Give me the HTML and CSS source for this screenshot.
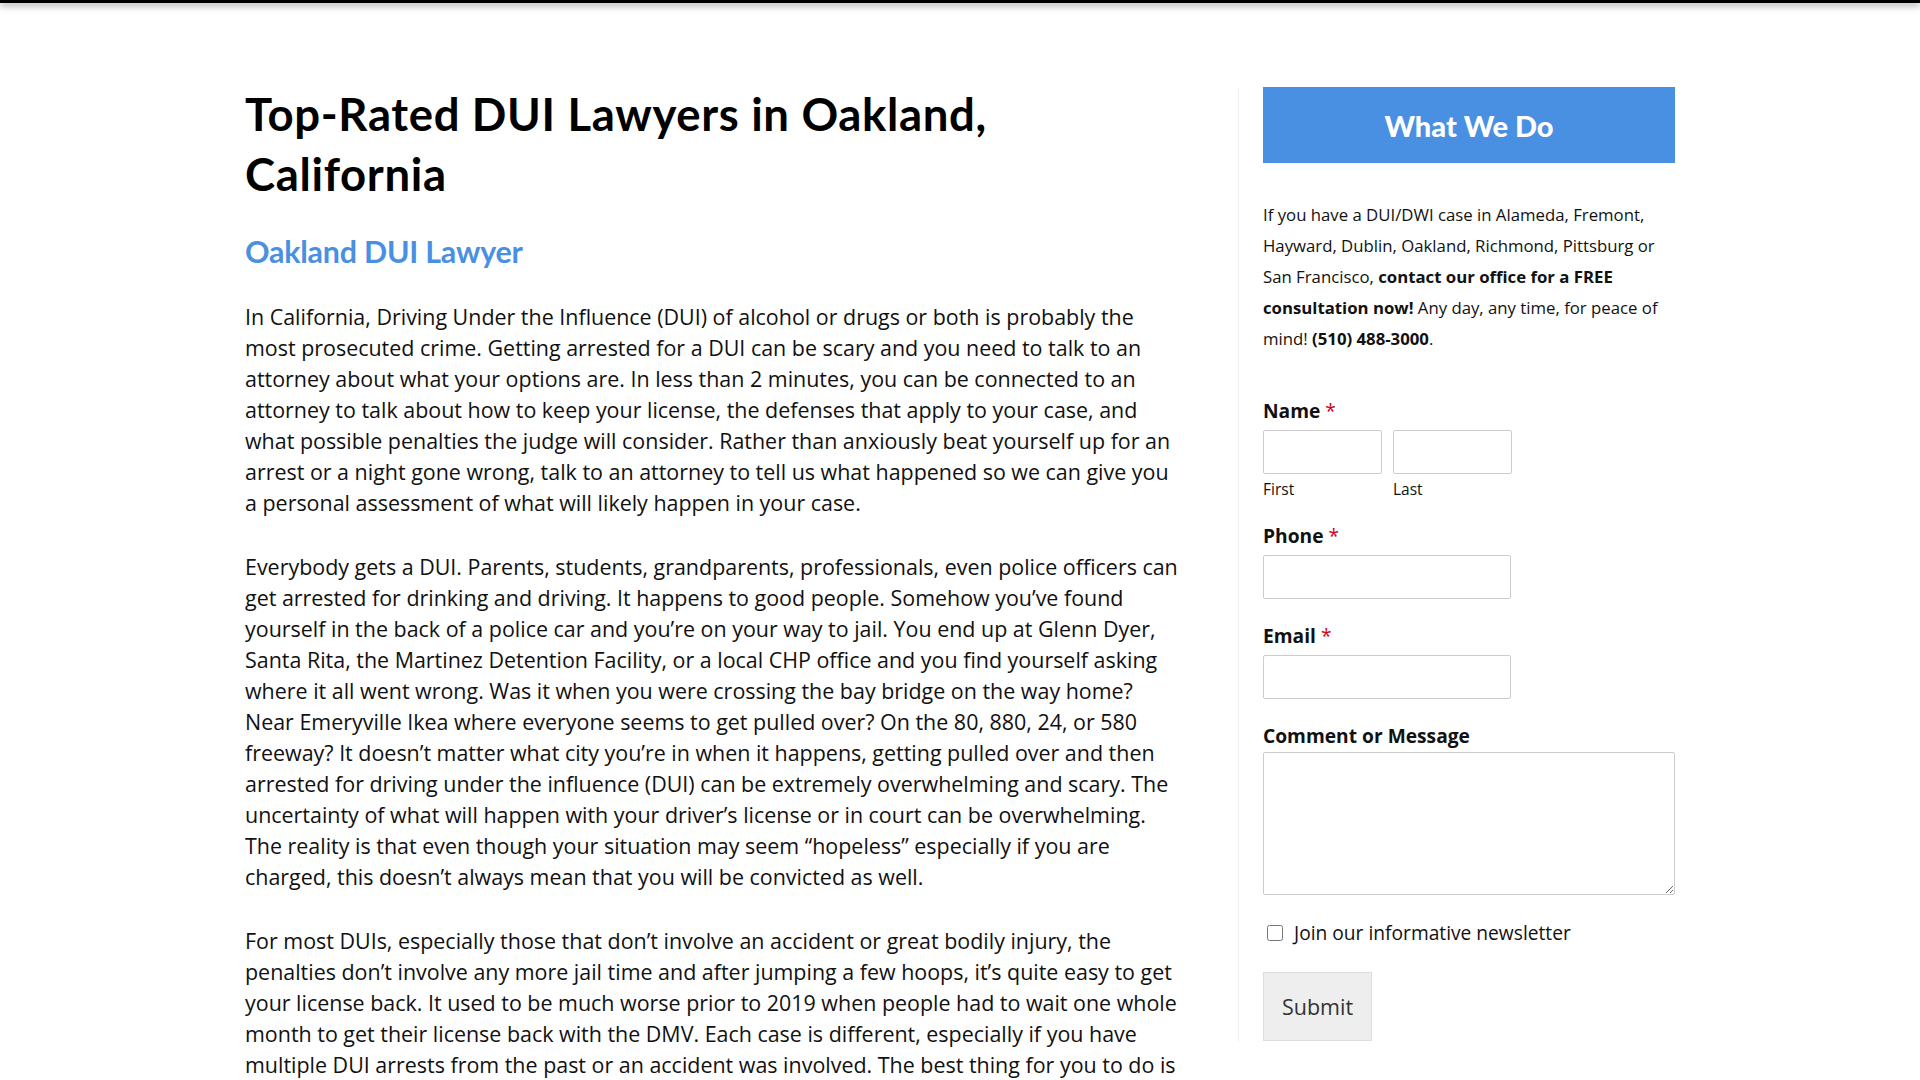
FILE: index.html
```html
<!DOCTYPE html>
<html lang="en">
<head>
<meta charset="utf-8">
<title>Top-Rated DUI Lawyers in Oakland, California</title>
<link rel="stylesheet" href="styles.css">
</head>
<body>
<div class="topbar"></div>
<div class="page">
  <main class="content">
    <h1 class="title">Top-Rated DUI Lawyers in Oakland, California</h1>
    <h2 class="subtitle">Oakland DUI Lawyer</h2>
    <p class="para">In California, Driving Under the Influence (DUI) of alcohol or drugs or both is probably the most prosecuted crime. Getting arrested for a DUI can be scary and you need to talk to an attorney about what your options are. In less than 2 minutes, you can be connected to an attorney to talk about how to keep your license, the defenses that apply to your case, and what possible penalties the judge will consider. Rather than anxiously beat yourself up for an arrest or a night gone wrong, talk to an attorney to tell us what happened so we can give you a personal assessment of what will likely happen in your case.</p>
    <p class="para">Everybody gets a DUI. Parents, students, grandparents, professionals, even police officers can get arrested for drinking and driving. It happens to good people. Somehow you’ve found yourself in the back of a police car and you’re on your way to jail. You end up at Glenn Dyer, Santa Rita, the Martinez Detention Facility, or a local CHP office and you find yourself asking where it all went wrong. Was it when you were crossing the bay bridge on the way home? Near Emeryville Ikea where everyone seems to get pulled over? On the 80, 880, 24, or 580 freeway? It doesn’t matter what city you’re in when it happens, getting pulled over and then arrested for driving under the influence (DUI) can be extremely overwhelming and scary. The uncertainty of what will happen with your driver’s license or in court can be overwhelming. The reality is that even though your situation may seem “hopeless” especially if you are charged, this doesn’t always mean that you will be convicted as well.</p>
    <p class="para">For most DUIs, especially those that don’t involve an accident or great bodily injury, the penalties don’t involve any more jail time and after jumping a few hoops, it’s quite easy to get your license back. It used to be much worse prior to 2019 when people had to wait one whole month to get their license back with the DMV. Each case is different, especially if you have multiple DUI arrests from the past or an accident was involved. The best thing for you to do is to call an attorney as soon as possible so they can help you figure out what comes next.</p>
  </main>
  <aside class="sidebar">
    <div class="widget-head">What We Do</div>
    <p class="widget-text">If you have a DUI/DWI case in Alameda, Fremont, Hayward, Dublin, Oakland, Richmond, Pittsburg or San Francisco, <strong>contact our office for a FREE consultation now!</strong> Any day, any time, for peace of mind! <strong>(510) 488-3000</strong>.</p>
    <form class="form">
      <div class="field">
        <div class="label">Name <span class="req">*</span></div>
        <div class="name-row">
          <div class="name-col">
            <input class="input input-half" type="text">
            <div class="sublabel">First</div>
          </div>
          <div class="name-col">
            <input class="input input-half" type="text">
            <div class="sublabel">Last</div>
          </div>
        </div>
      </div>
      <div class="field">
        <div class="label">Phone <span class="req">*</span></div>
        <input class="input input-med" type="text">
      </div>
      <div class="field">
        <div class="label">Email <span class="req">*</span></div>
        <input class="input input-med" type="text">
      </div>
      <div class="field">
        <div class="label">Comment or Message</div>
        <textarea class="textarea"></textarea>
      </div>
      <label class="check-row"><input class="check" type="checkbox"><span>Join our informative newsletter</span></label>
      <button class="submit" type="button">Submit</button>
    </form>
  </aside>
</div>
</body>
</html>
```
FILE: styles.css
```css
html, body {
  margin: 0;
  padding: 0;
  background: #fff;
}
body {
  font-family: "Open Sans", "Liberation Sans", sans-serif;
  color: #111;
  overflow: hidden;
}
.topbar {
  height: 3px;
  background: #000;
  box-shadow: 0 2px 7px rgba(0, 0, 0, 0.55);
}
.page {
  width: 1430px;
  margin: 0 auto;
  padding-top: 85px;
  display: flex;
  align-items: flex-start;
}
.content {
  flex: 0 0 938px;
  margin-right: 55px;
}
.title {
  font-family: "Lato", "Liberation Sans", sans-serif;
  font-weight: 700;
  font-size: 45.5px;
  line-height: 60px;
  margin: -4px 0 0;
  max-width: 860px;
  color: #000;
  letter-spacing: 0.65px;
}
.subtitle {
  font-family: "Lato", "Liberation Sans", sans-serif;
  font-weight: 700;
  font-size: 30.4px;
  line-height: 40px;
  margin: 27px 0 0;
  color: #4a90e2;
  letter-spacing: -0.2px;
}
.para {
  font-size: 21.45px;
  line-height: 31px;
  margin: 30px 0 33px;
  color: #111;
}
.para + .para {
  margin-top: 0;
}
.sidebar {
  flex: 1 1 auto;
  border-left: 1px solid #eee;
  padding-left: 24px;
}
.widget-head {
  height: 76px;
  margin-top: -1px;
  background: #4a90e2;
  color: #fff;
  font-family: "Lato", "Liberation Sans", sans-serif;
  font-weight: 900;
  font-size: 29px;
  display: flex;
  align-items: center;
  justify-content: center;
}
.widget-text {
  font-size: 16.75px;
  line-height: 31px;
  margin: 36px 0 44px;
  color: #111;
}
.widget-text strong {
  font-weight: 700;
}
.field {
  margin-bottom: 24px;
}
.label {
  font-weight: 700;
  font-size: 19.2px;
  line-height: 24px;
  padding-top: 1px;
  margin-bottom: 7px;
  color: #111;
}
.req {
  color: #d0021b;
  font-weight: 400;
}
.name-row {
  display: flex;
  gap: 11px;
}
.input {
  display: block;
  box-sizing: border-box;
  height: 44px;
  border: 1px solid #ccc;
  border-radius: 2px;
  background: #fff;
  margin: 0;
  padding: 0 8px;
}
.input-half {
  width: 119px;
}
.input-med {
  width: 248px;
}
.sublabel {
  font-size: 15.5px;
  line-height: 20px;
  margin-top: 5px;
  color: #111;
}
.textarea {
  display: block;
  box-sizing: border-box;
  width: 100%;
  height: 143px;
  border: 1px solid #ccc;
  border-radius: 2px;
  margin: -3px 0 0;
  padding: 8px;
  font-family: inherit;
}
.check-row {
  display: flex;
  align-items: center;
  gap: 11px;
  font-size: 19.2px;
  line-height: 24px;
  margin-top: 26px;
  padding-left: 4px;
  color: #111;
}
.check {
  width: 16px;
  height: 16px;
  margin: 0;
}
.submit {
  display: block;
  margin-top: 27px;
  width: 109px;
  height: 69px;
  background: #eee;
  border: 1px solid #ddd;
  border-radius: 0;
  font-family: "Open Sans", "Liberation Sans", sans-serif;
  font-size: 21.5px;
  color: #333;
  padding: 0;
}
```
